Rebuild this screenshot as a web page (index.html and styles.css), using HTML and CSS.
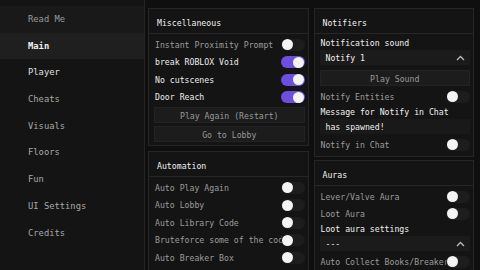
FILE: index.html
```html
<!DOCTYPE html>
<html lang="en">
<head>
  <meta charset="UTF-8">
  <title>Hub</title>
  <link rel="stylesheet" href="styles.css">
</head>
<body>

<div class="window">
  <div class="sidebar">
    <div class="tab hover">Read Me</div>
    <div class="tab active">Main</div>
    <div class="tab bright">Player</div>
    <div class="tab">Cheats</div>
    <div class="tab">Visuals</div>
    <div class="tab">Floors</div>
    <div class="tab">Fun</div>
    <div class="tab">UI Settings</div>
    <div class="tab">Credits</div>
  </div>

  <div class="content">
    <div class="column">
      <div class="panel">
        <div class="panel-head">Miscellaneous</div>
        <div class="panel-body">
          <div class="row dim"><span>Instant Proximity Prompt</span><span class="toggle"></span></div>
          <div class="row"><span>break ROBLOX Void</span><span class="toggle on"></span></div>
          <div class="row"><span>No cutscenes</span><span class="toggle on"></span></div>
          <div class="row"><span>Door Reach</span><span class="toggle on"></span></div>
          <div class="btn first">Play Again (Restart)</div>
          <div class="btn">Go to Lobby</div>
        </div>
      </div>

      <div class="panel">
        <div class="panel-head">Automation</div>
        <div class="panel-body">
          <div class="row dim"><span>Auto Play Again</span><span class="toggle"></span></div>
          <div class="row dim"><span>Auto Lobby</span><span class="toggle"></span></div>
          <div class="row dim"><span>Auto Library Code</span><span class="toggle"></span></div>
          <div class="row dim"><span>Bruteforce some of the code</span><span class="toggle"></span></div>
          <div class="row dim"><span>Auto Breaker Box</span><span class="toggle"></span></div>
        </div>
      </div>
    </div>

    <div class="column">
      <div class="panel">
        <div class="panel-head">Notifiers</div>
        <div class="panel-body">
          <div class="label">Notification sound</div>
          <div class="select">
            <span>Notify 1</span>
            <svg width="9" height="6" viewBox="0 0 9 6"><path d="M1 5 L4.5 1.5 L8 5" fill="none" stroke="#bbb" stroke-width="1.3"/></svg>
          </div>
          <div class="btn play">Play Sound</div>
          <div class="row small dim"><span>Notify Entities</span><span class="toggle"></span></div>
          <div class="label">Message for Notify in Chat</div>
          <div class="select input"><span>has spawned!</span></div>
          <div class="row small dim gap"><span>Notify in Chat</span><span class="toggle"></span></div>
        </div>
      </div>

      <div class="panel">
        <div class="panel-head">Auras</div>
        <div class="panel-body">
          <div class="row small dim"><span>Lever/Valve Aura</span><span class="toggle"></span></div>
          <div class="row small dim"><span>Loot Aura</span><span class="toggle"></span></div>
          <div class="label">Loot aura settings</div>
          <div class="select">
            <span>---</span>
            <svg width="9" height="6" viewBox="0 0 9 6"><path d="M1 5 L4.5 1.5 L8 5" fill="none" stroke="#bbb" stroke-width="1.3"/></svg>
          </div>
          <div class="row small dim gap"><span>Auto Collect Books/Breaker</span><span class="toggle"></span></div>
        </div>
      </div>
    </div>
  </div>
</div>

</body>
</html>
```

FILE: styles.css
```css
* {
  margin: 0;
  padding: 0;
  box-sizing: border-box;
}

body, html {
  width: 480px;
  height: 270px;
  overflow: hidden;
  background-color: #0f0f0f;
  font-family: 'DejaVu Sans Mono', monospace;
  color: #e6e6e6;
}

.window {
  display: flex;
  height: 270px;
}

.sidebar {
  width: 145px;
  flex-shrink: 0;
  background-color: #141414;
  border-right: 1px solid #242424;
  padding-top: 6px;
}

.tab {
  height: 26.7px;
  line-height: 26.7px;
  padding-left: 28px;
  font-size: 8.8px;
  color: #a8a8a8;
}

.tab.hover {
  background-color: #191919;
  color: #9a9a9a;
}

.tab.active {
  background-color: #1f1f1f;
  color: #f2f2f2;
  font-weight: bold;
}

.tab.bright {
  color: #e0e0e0;
}

.content {
  flex: 1;
  display: grid;
  grid-template-columns: 1fr 1fr;
  column-gap: 5px;
  padding: 8px 6px 0 3px;
  min-width: 0;
}

.column {
  display: flex;
  flex-direction: column;
  gap: 5px;
  min-width: 0;
}

.column + .column .panel + .panel {
  margin-top: -2px;
}

.panel {
  background-color: #141414;
  border: 1px solid #262626;
  font-size: 8.2px;
}

.panel-head {
  height: 25px;
  padding: 4px 0 0 8px;
  line-height: 20px;
  color: #f0f0f0;
  border-bottom: 1px solid #262626;
}

.panel-body {
  padding: 2px 3px 3px 5px;
}

.row {
  height: 17.5px;
  display: flex;
  align-items: center;
  justify-content: space-between;
  padding-left: 1px;
  color: #ededed;
}

.row span:first-child {
  white-space: nowrap;
  min-width: 0;
}

.row.small {
  height: 17px;
}

.row.gap {
  margin-top: 2px;
}

.row.dim {
  color: #9c9c9c;
}

.toggle {
  flex-shrink: 0;
  position: relative;
  width: 24px;
  height: 12px;
  border-radius: 6px;
  background-color: #1d1d1d;
}

.toggle::after {
  content: "";
  position: absolute;
  top: 0.5px;
  left: 1px;
  width: 11px;
  height: 11px;
  border-radius: 50%;
  background-color: #f4f4f4;
}

.toggle.on {
  background-color: #6c4fe0;
}

.toggle.on::after {
  left: 12px;
}

.btn {
  height: 16px;
  line-height: 16px;
  text-align: center;
  background-color: #1c1c1c;
  border: 1px solid #232323;
  color: #9a9a9a;
  margin-top: 3px;
}

.btn.first {
  margin-top: 1px;
}

.btn.play {
  margin-top: 5px;
  margin-bottom: 2px;
}

.label {
  height: 14px;
  line-height: 14px;
  padding-left: 1px;
  color: #f0f0f0;
}

.select {
  height: 15px;
  display: flex;
  align-items: center;
  justify-content: space-between;
  padding: 0 5px 0 6px;
  background-color: #1b1b1b;
  color: #f0f0f0;
}

.select.input {
  background-color: #191919;
}
```
